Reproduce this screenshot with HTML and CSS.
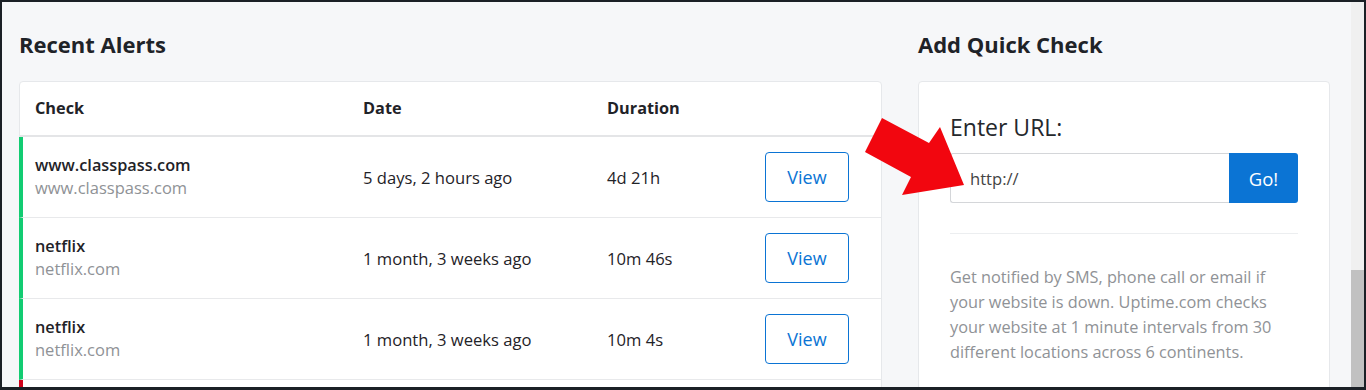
FILE: index.html
```html
<!DOCTYPE html>
<html lang="en">
<head>
    <meta charset="UTF-8">
    <meta name="viewport" content="width=device-width, initial-scale=1.0">
    <title>Dashboard</title>
    <link rel="stylesheet" href="styles.css">
</head>
<body>
    <div class="window">
        <div class="page">
            <section class="alerts">
                <h2>Recent Alerts</h2>
                <div class="card table">
                    <div class="row head">
                        <div>Check</div>
                        <div>Date</div>
                        <div>Duration</div>
                        <div></div>
                    </div>
                    <div class="row up">
                        <div class="check">
                            <div class="name">www.classpass.com</div>
                            <div class="host">www.classpass.com</div>
                        </div>
                        <div>5 days, 2 hours ago</div>
                        <div>4d 21h</div>
                        <div><button class="view">View</button></div>
                    </div>
                    <div class="row up">
                        <div class="check">
                            <div class="name">netflix</div>
                            <div class="host">netflix.com</div>
                        </div>
                        <div>1 month, 3 weeks ago</div>
                        <div>10m 46s</div>
                        <div><button class="view">View</button></div>
                    </div>
                    <div class="row up">
                        <div class="check">
                            <div class="name">netflix</div>
                            <div class="host">netflix.com</div>
                        </div>
                        <div>1 month, 3 weeks ago</div>
                        <div>10m 4s</div>
                        <div><button class="view">View</button></div>
                    </div>
                    <div class="row down"></div>
                </div>
            </section>

            <section class="quick">
                <h2>Add Quick Check</h2>
                <div class="card form">
                    <label for="url">Enter URL:</label>
                    <div class="url-group">
                        <input type="text" id="url" value="http://">
                        <button class="go">Go!</button>
                    </div>
                    <hr>
                    <p>Get notified by SMS, phone call or email if your website is down. Uptime.com checks your website at 1 minute intervals from 30 different locations across 6 continents.</p>
                </div>
            </section>

            <svg class="arrow" width="110" height="90" viewBox="0 0 110 90">
                <polygon points="19,0 66,25 77,9 101,67 39,77 48,59 2,34" fill="#f2060f"/>
            </svg>
        </div>
        <div class="scrollbar">
            <div class="thumb"></div>
        </div>
    </div>
</body>
</html>
```

FILE: styles.css
```css
* {
    box-sizing: border-box;
}

body {
    margin: 0;
    font-family: "Open Sans", Lato, sans-serif;
    color: #1f2328;
    background: #1b2026;
}

.window {
    height: 390px;
    border: 2px solid #1b2026;
    border-bottom-width: 3px;
    display: flex;
    background: #f6f7f9;
    overflow: hidden;
}

.page {
    flex: 1;
    position: relative;
    display: flex;
    gap: 36px;
    padding: 0 21px 0 17px;
}

h2 {
    margin: 0;
    height: 79px;
    padding-top: 27px;
    font-size: 22px;
    font-weight: 700;
    color: #1f2328;
}

.card {
    background: #fff;
    border: 1px solid #e6e8eb;
    border-radius: 4px;
}

.alerts {
    width: 863px;
}

.quick {
    flex: 1;
}

/* table */
.row {
    display: grid;
    grid-template-columns: 328px 244px 1fr auto;
    align-items: center;
    padding: 0 32px 0 15px;
    font-size: 16.6px;
    border-bottom: 1px solid #e8e9eb;
}

.row.head {
    height: 55px;
    padding-bottom: 1px;
    font-weight: 700;
    font-size: 16.3px;
    border-bottom: 2px solid #e4e5e7;
}

.row.up,
.row.down {
    height: 81px;
    margin-left: -1px;
    padding-left: 12px;
    border-left: 4px solid #12cc72;
}

.row.down {
    border-left-color: #d0021b;
}

.check {
    padding-bottom: 1px;
}

.name {
    font-weight: 600;
    font-size: 16.3px;
}

.host {
    color: #8f9296;
    font-size: 16.5px;
}

.view {
    width: 84px;
    height: 50px;
    background: #fff;
    border: 1px solid #0b74d4;
    border-radius: 4px;
    color: #0b74d4;
    font-family: inherit;
    font-size: 18px;
    cursor: pointer;
}

/* quick check form */
.form {
    height: 320px;
    padding: 29px 31px 0 31px;
}

.form label {
    display: block;
    font-size: 23px;
    font-weight: 500;
    color: #25282c;
    margin-bottom: 10px;
}

.url-group {
    display: flex;
    height: 50px;
}

.url-group input {
    flex: 1;
    min-width: 0;
    border: 1px solid #d4d6d9;
    border-right: none;
    border-radius: 3px 0 0 3px;
    padding: 0 19px;
    font-family: inherit;
    font-size: 16.6px;
    color: #444;
}

.go {
    width: 69px;
    border: none;
    border-radius: 0 3px 3px 0;
    background: #0b74d4;
    color: #fff;
    font-family: inherit;
    font-size: 18.5px;
    font-weight: 500;
    cursor: pointer;
}

.form hr {
    border: none;
    border-top: 1px solid #eceef0;
    margin: 30px 0 31px;
}

.form p {
    margin: 0;
    font-size: 16.3px;
    line-height: 25px;
    color: #8f9296;
}

.arrow {
    position: absolute;
    left: 861px;
    top: 116px;
}

.scrollbar {
    width: 13px;
    background: #f0f0f0;
    display: flex;
    flex-direction: column;
    justify-content: flex-end;
}

.thumb {
    height: 117px;
    background: #c1c1c1;
}
```
